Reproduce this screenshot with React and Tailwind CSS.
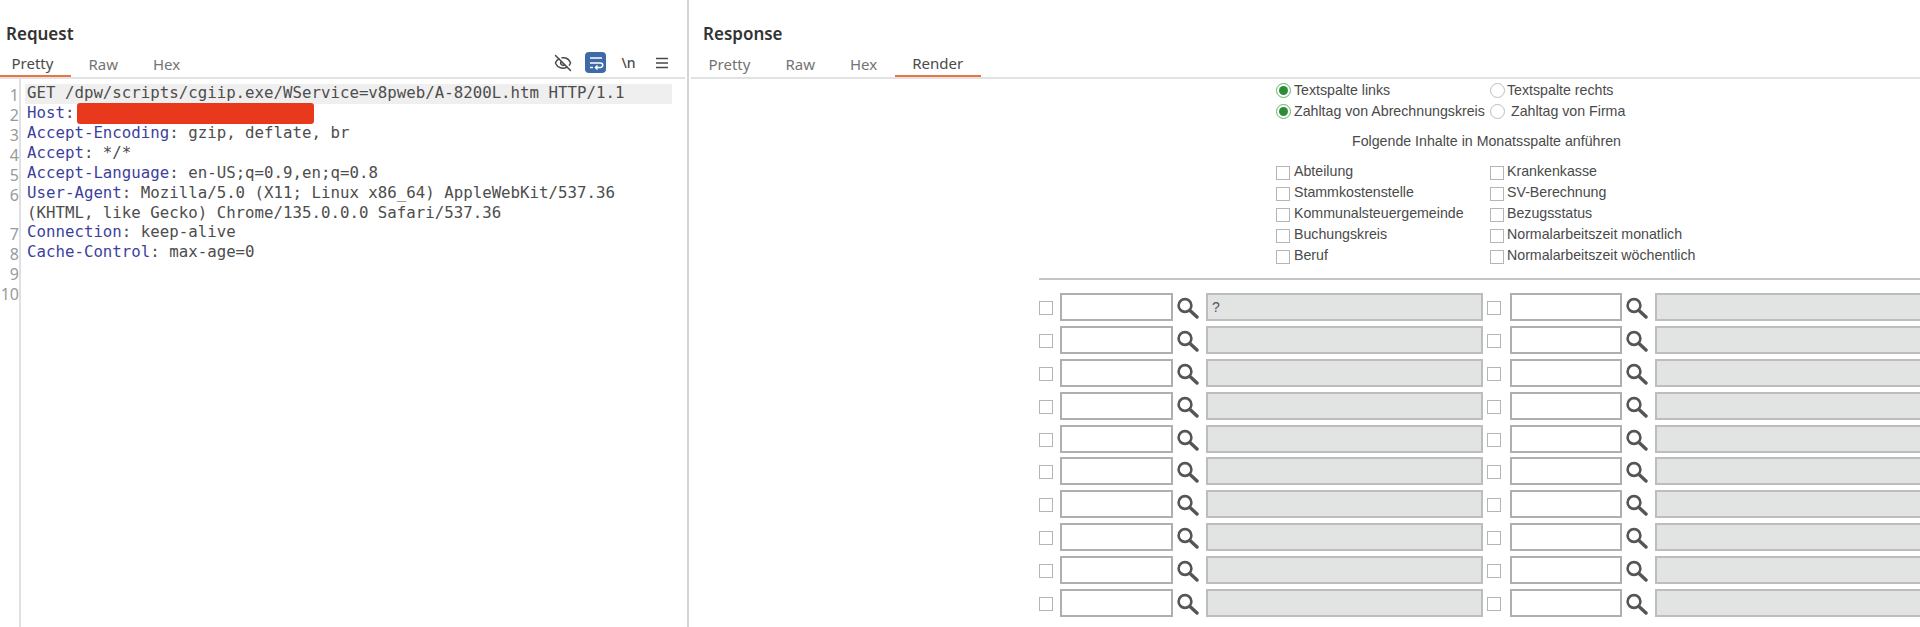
import { EyeOff } from 'lucide-react'

const uiFont = { fontFamily: '"Noto Sans", sans-serif' }

const requestLines = [
  { n: 1, parts: [['GET /dpw/scripts/cgiip.exe/WService=v8pweb/A-8200L.htm HTTP/1.1', false]], active: true },
  { n: 2, parts: [['Host', true], [':', false]], redacted: true },
  { n: 3, parts: [['Accept-Encoding', true], [': gzip, deflate, br', false]] },
  { n: 4, parts: [['Accept', true], [': */*', false]] },
  { n: 5, parts: [['Accept-Language', true], [': en-US;q=0.9,en;q=0.8', false]] },
  {
    n: 6,
    parts: [['User-Agent', true], [': Mozilla/5.0 (X11; Linux x86_64) AppleWebKit/537.36', false]],
    wrap: '(KHTML, like Gecko) Chrome/135.0.0.0 Safari/537.36'
  },
  { n: 7, parts: [['Connection', true], [': keep-alive', false]] },
  { n: 8, parts: [['Cache-Control', true], [': max-age=0', false]] },
  { n: 9, parts: [] },
  { n: 10, parts: [] }
]

const checkRows = [
  ['Abteilung', 'Krankenkasse'],
  ['Stammkostenstelle', 'SV-Berechnung'],
  ['Kommunalsteuergemeinde', 'Bezugsstatus'],
  ['Buchungskreis', 'Normalarbeitszeit monatlich'],
  ['Beruf', 'Normalarbeitszeit wöchentlich']
]

const lookupRows = [0, 1, 2, 3, 4, 5, 6, 7, 8, 9]

function Tabs({ items, active }) {
  return (
    <div className="flex h-[26px] items-start" style={uiFont}>
      {items.map((item) => (
        <div
          key={item}
          className={`flex h-[26px] items-center px-[17.5px] pt-[1px] text-[15px] ${
            item === active ? 'border-b-2 border-[#ea7444] text-[#4a4a4a]' : 'text-[#737373]'
          }`}
        >
          {item}
        </div>
      ))}
    </div>
  )
}

function WrapIcon() {
  return (
    <svg width="16" height="16" viewBox="0 0 16 16" fill="none" stroke="white" strokeWidth="1.5">
      <path d="M2 3h12" />
      <path d="M2 8h10.5a2 2 0 0 1 0 4.5H8" />
      <path d="M9.5 10.5 7.5 12.5l2 2" />
      <path d="M2 12.5h3" />
    </svg>
  )
}

function MenuIcon() {
  return (
    <svg width="12" height="12" viewBox="0 0 12 12" fill="none" stroke="#4a4a4a" strokeWidth="1.7">
      <path d="M0 1.5h12M0 6h12M0 10.5h12" />
    </svg>
  )
}

function Magnifier() {
  return (
    <svg width="22" height="28" viewBox="0 0 22 28" fill="none" stroke="#555555" className="shrink-0">
      <circle cx="8" cy="12.5" r="6.4" strokeWidth="2.6" />
      <path d="M13 17.5l7 6.5" strokeWidth="3.4" strokeLinecap="round" />
    </svg>
  )
}

function Radio({ checked }) {
  return (
    <span
      className={`flex h-[15px] w-[15px] shrink-0 items-center justify-center rounded-full border bg-white ${
        checked ? 'border-[#5db765]' : 'border-[#bdbdbd]'
      }`}
    >
      {checked && <span className="h-[9px] w-[9px] rounded-full bg-[#2e8b36]" />}
    </span>
  )
}

function Check({ className = '' }) {
  return <span className={`block h-[14px] w-[14px] shrink-0 border border-[#b5b5b5] bg-white ${className}`} />
}

function LookupGroup({ value, inputClass, greyClass }) {
  return (
    <>
      <Check className="mt-[8px]" />
      <div className={`h-[28px] shrink-0 border-2 border-[#afafaf] bg-white ${inputClass}`} />
      <div className="ml-[4px] w-[22px] shrink-0">
        <Magnifier />
      </div>
      <div
        className={`ml-[7px] flex h-[28px] shrink-0 items-center border-2 border-[#bdbdbd] bg-[#e2e3e3] pl-[4px] text-[14px] text-[#555] ${greyClass}`}
      >
        {value}
      </div>
    </>
  )
}

export default function App() {
  return (
    <div className="flex h-[627px] w-[1920px] overflow-hidden bg-white">
      {/* Request pane */}
      <div className="flex h-full w-[689px] shrink-0 flex-col border-r-2 border-[#d4d4d4]">
        <div className="h-[51px] pl-[6px] pt-[23px] text-[17px] leading-[22px] font-semibold text-[#333]" style={uiFont}>
          Request
        </div>
        <div className="mr-[2px] flex items-center justify-between border-b-2 border-[#e2e2e2] pr-[7px]">
          <div className="-ml-[6px]">
            <Tabs items={['Pretty', 'Raw', 'Hex']} active="Pretty" />
          </div>
          <div className="flex items-center pb-[3px]">
            <span className="flex w-[33px] justify-center">
              <EyeOff size={18} strokeWidth={2} color="#4a4a4a" />
            </span>
            <span className="flex w-[33px] justify-center">
              <span className="flex h-[21px] w-[21px] items-center justify-center rounded-[4px] bg-[#3f6aa8]">
                <WrapIcon />
              </span>
            </span>
            <span className="w-[33px] text-center text-[14px] font-medium text-[#4a4a4a]" style={uiFont}>
              \n
            </span>
            <span className="flex w-[33px] justify-center">
              <MenuIcon />
            </span>
          </div>
        </div>
        <div className="relative flex-1 pt-[5px] text-[15.75px] leading-[20px]" style={{ fontFamily: '"DejaVu Sans Mono", monospace' }}>
          <div className="absolute bottom-0 left-[19px] top-0 w-[2px] bg-[#e0e0e0]" />
          {requestLines.map((line) => (
            <div key={line.n}>
              <div className="flex">
                <div className="h-[20px] w-[19px] shrink-0 pt-[1px] text-right text-[16px] text-[#9a9a9a]" style={uiFont}>
                  {line.n}
                </div>
                <div
                  className={`ml-[6px] mr-[15px] flex h-[20px] flex-1 whitespace-pre pl-[2px] text-[#4d4d4d] ${
                    line.active ? 'bg-[#efefef]' : ''
                  }`}
                >
                  {line.parts.map(([text, isKey]) => (
                    <span key={text} className={`-mt-[1px] ${isKey ? 'text-[#3d3f9e]' : ''}`}>
                      {text}
                    </span>
                  ))}
                  {line.redacted && <span className="ml-[3px] mt-[-1px] h-[21px] w-[237px] rounded-[3px] bg-[#e8391d]" />}
                </div>
              </div>
              {line.wrap && (
                <div className="-mt-[1px] h-[20px] whitespace-pre pl-[27px] text-[#4d4d4d]">{line.wrap}</div>
              )}
            </div>
          ))}
        </div>
      </div>

      {/* Response pane */}
      <div className="h-full min-w-0 flex-1">
        <div className="h-[51px] pl-[14px] pt-[23px] text-[17px] leading-[22px] font-semibold text-[#333]" style={uiFont}>
          Response
        </div>
        <div className="ml-[2px] border-b-2 border-[#e2e2e2]">
          <Tabs items={['Pretty', 'Raw', 'Hex', 'Render']} active="Render" />
        </div>

        <div className="pl-[350px] pt-[1px] text-[14.2px] leading-[21px] text-[#4a4a4a]" style={{ fontFamily: '"Liberation Sans", sans-serif' }}>
          <div className="pl-[237px]">
            <div className="flex h-[21px] items-center">
              <div className="flex w-[214px] items-center gap-[3px]">
                <Radio checked />
                Textspalte links
              </div>
              <div className="flex items-center gap-[2px]">
                <Radio />
                Textspalte rechts
              </div>
            </div>
            <div className="flex h-[21px] items-center">
              <div className="flex w-[214px] items-center gap-[3px] whitespace-nowrap">
                <Radio checked />
                Zahltag von Abrechnungskreis
              </div>
              <div className="flex items-center gap-[6px]">
                <Radio />
                Zahltag von Firma
              </div>
            </div>
            <div className="w-[449px] pl-[76px] pt-[9px] pb-[9px]">Folgende Inhalte in Monatsspalte anführen</div>
            {checkRows.map(([left, right]) => (
              <div key={left} className="flex h-[21px] items-center">
                <div className="flex w-[214px] items-center gap-[4px]">
                  <Check className="mt-[3px]" />
                  {left}
                </div>
                <div className="flex items-center gap-[3px]">
                  <Check className="mt-[3px]" />
                  {right}
                </div>
              </div>
            ))}
          </div>

          <div className="mt-[12px] h-[2px] bg-[#c4c4c4]" />

          <div className="flex flex-col gap-[4.9px] pt-[13px]">
            {lookupRows.map((row) => (
              <div key={row} className="flex h-[28px]">
                <LookupGroup value={row === 0 ? '?' : ''} inputClass="ml-[7px] w-[113px]" greyClass="w-[277px]" />
                <div className="w-[4px] shrink-0" />
                <LookupGroup inputClass="ml-[9px] w-[112px]" greyClass="w-[300px]" />
              </div>
            ))}
          </div>
        </div>
      </div>
    </div>
  )
}
